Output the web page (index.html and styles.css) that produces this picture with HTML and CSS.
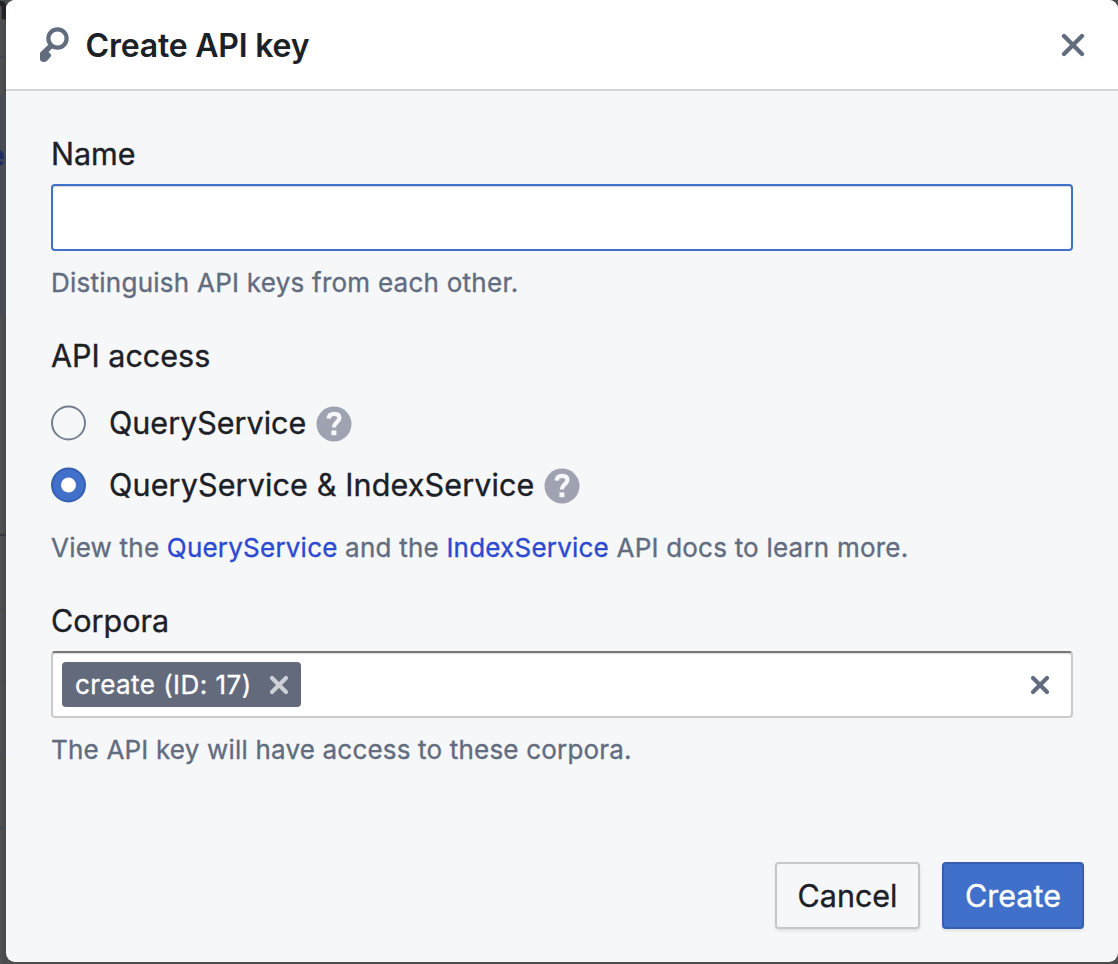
FILE: index.html
```html
<!DOCTYPE html>
<html lang="en">
<head>
<meta charset="utf-8">
<title>Create API key</title>
<link rel="stylesheet" href="styles.css">
</head>
<body>
<div class="backdrop"><span class="behind-title">n</span><span class="behind-link">e</span></div>
<main class="dialog">
  <header class="dialog-header">
    <svg class="key-icon" width="32" height="36" viewBox="0 0 32 36">
      <circle cx="18.5" cy="11.5" r="9.1" fill="none" stroke="#626c7f" stroke-width="4.2"/>
      <path d="M10 16.5 L13.8 20.8 L9.6 25 Q12 26.6 12.2 28.4 Q11.8 29.8 10.8 30.6 Q9.8 32.4 7.8 34 Q6.6 35 5 35 Q1 34.8 1 32.3 V25.8 L9 18 Z" fill="#626c7f"/>
    </svg>
    <h1 class="dialog-title"><span class="t-title">Create API key</span></h1>
    <svg class="close-icon" width="24" height="24" viewBox="0 0 24 24"><path d="M3 3 L21 21 M21 3 L3 21"/></svg>
  </header>
  <section class="dialog-body">
    <div class="field name-field">
      <label class="label t-name">Name</label>
      <div class="text-input"></div>
      <p class="help"><span class="t-help1">Distinguish API keys from each other.</span></p>
    </div>
    <div class="field access-field">
      <div class="label t-access">API access</div>
      <div class="option">
        <span class="radio"></span><span class="option-text t-query">QueryService</span>
        <svg class="info" width="36" height="36" viewBox="0 0 36 36"><circle cx="18" cy="18" r="17.5" fill="#9fa3b1"/><path d="M12.4 12.6 C13 9 15.3 7.9 18.2 7.9 C21.4 7.9 23.4 9.4 23.4 12.1 C23.4 15.9 18 16.4 18 21.6" fill="none" stroke="#f6f7f9" stroke-width="4.2"/><path d="M15.4 24.4h5v4.8h-5z" fill="#f6f7f9"/></svg>
      </div>
      <div class="option">
        <span class="radio checked"></span><span class="option-text t-index">QueryService &amp; IndexService</span>
        <svg class="info" width="36" height="36" viewBox="0 0 36 36"><circle cx="18" cy="18" r="17.5" fill="#9fa3b1"/><path d="M12.4 12.6 C13 9 15.3 7.9 18.2 7.9 C21.4 7.9 23.4 9.4 23.4 12.1 C23.4 15.9 18 16.4 18 21.6" fill="none" stroke="#f6f7f9" stroke-width="4.2"/><path d="M15.4 24.4h5v4.8h-5z" fill="#f6f7f9"/></svg>
      </div>
      <p class="help"><span class="t-help2">View the <a class="link">QueryService</a> and the <a class="link">IndexService</a> API docs to learn more.</span></p>
    </div>
    <div class="field corpora-field">
      <label class="label t-corpora">Corpora</label>
      <div class="tag-input">
        <span class="tag"><span class="tag-text t-tag">create (ID: 17)</span><svg class="tag-remove" width="20" height="20" viewBox="0 0 20 20"><path d="M3 3 L17 17 M17 3 L3 17"/></svg></span>
        <svg class="clear-icon" width="20" height="20" viewBox="0 0 20 20"><path d="M3 3 L17 17 M17 3 L3 17"/></svg>
      </div>
      <p class="help"><span class="t-help3">The API key will have access to these corpora.</span></p>
    </div>
  </section>
  <footer class="dialog-footer">
    <button class="button cancel"><span class="t-cancel">Cancel</span></button>
    <button class="button primary"><span class="t-create">Create</span></button>
  </footer>
</main>
</body>
</html>
```
FILE: styles.css
```css
* { box-sizing: border-box; }
html, body { height: 100%; overflow: hidden; }
body { margin: 0; padding-left: 6px; background: #4d4d4e; font-family: Inter, "Liberation Sans", sans-serif; color: #1c2027; -webkit-text-stroke: .35px currentColor; }

.backdrop {
  position: absolute; left: 0; top: 0; width: 6px; height: 964px; overflow: hidden;
  background-image:
    linear-gradient(#414550 0 0),
    linear-gradient(#474b54 0 0),
    linear-gradient(#363840 0 0),
    linear-gradient(#454952 0 0),
    linear-gradient(#454952 0 0),
    linear-gradient(#454952 0 0),
    linear-gradient(#454952 0 0),
    linear-gradient(90deg, #505152, #484849);
  background-size: 6px 2px, 6px 221px, 6px 2px, 6px 1px, 6px 1px, 6px 2px, 6px 2px, 6px 964px;
  background-position: 0 56px, 0 95px, 0 485px, 0 544px, 0 602px, 0 660px, 0 717px, 0 0;
  background-position: 0 56px, 0 95px, 0 534px, 0 608px, 0 681px, 0 754px, 0 827px, 0 0;
  background-repeat: no-repeat;
}
.behind-title { position: absolute; right: -2px; top: -12px; font: 600 32px/40px Inter, sans-serif; color: #202226; }
.behind-link { position: absolute; right: 1px; top: 142px; font: 600 29px/28px Inter, sans-serif; color: #202b66; }

.dialog { position: relative; display: flex; flex-direction: column; width: 1112px; height: 962px; border-radius: 9px; overflow: hidden; background: #f6f7f9; }
.dialog-header { display: flex; align-items: center; height: 91px; padding: 0 33px; background: #fff; border-bottom: 2px solid #d4d5d7; }
.key-icon { flex: none; margin-right: 14.5px; }
.dialog-title { flex: 1; margin: 0; padding-top: 2px; font-size: 32px; line-height: 40px; font-weight: 600; letter-spacing: -.2px; -webkit-text-stroke: 0; }
.close-icon path { fill: none; stroke: #626c7f; stroke-width: 4.3; stroke-linecap: round; }

.dialog-body { flex: 1; padding: 44px 45px 0; }
.field { display: flex; flex-direction: column; }
.label { align-self: flex-start; font-size: 30.5px; line-height: 38px; white-space: nowrap; }
.text-input { height: 67px; margin-top: 11px; border: 2px solid #4170cb; border-radius: 4px; background: #fff; box-shadow: inset 0 1px 1px rgba(17, 20, 24, .18); }
.help { margin: 0; font-size: 26px; line-height: 32px; color: #626c7f; white-space: nowrap; }
.name-field .help { margin-top: 16px; }
.link { color: #2c49d2; }
.t-help1 { letter-spacing: .25px; }
.t-help2 { letter-spacing: .215px; }
.t-help3 { letter-spacing: .19px; }
.t-index { letter-spacing: .14px; }
.t-tag { letter-spacing: .46px; }

.access-field { margin-top: 38px; }
.option { display: flex; align-items: center; height: 38px; margin-top: 29px; }
.option + .option { margin-top: 24px; }
.radio { width: 35px; height: 35px; flex: none; margin-right: 23px; border: 2px solid #748091; border-radius: 50%; transform: translateY(-.5px); }
.radio.checked { display: flex; align-items: center; justify-content: center; background: #4170cb; border-color: #3661b0; }
.radio.checked::after { content: ""; width: 15px; height: 15px; border-radius: 50%; background: #fff; }
.option-text { font-size: 30.5px; line-height: 38px; white-space: nowrap; }
.info { flex: none; margin: 1px 0 0 9.5px; }
.access-field .help { margin-top: 28px; }

.corpora-field { margin-top: 38px; }
.tag-input { display: flex; align-items: center; justify-content: space-between; height: 67px; margin-top: 11px; padding: 0 21px 0 9px; border: 2px solid #c9cbce; border-top-color: #77797c; border-radius: 4px; background: #fff; box-shadow: inset 0 1px 1px rgba(17, 20, 24, .15); }
.tag { display: flex; align-items: center; justify-content: space-between; width: 239px; height: 45px; padding: 0 12px 0 13px; border-radius: 4px; background: #626a7b; color: #fff; }
.tag-text { font-size: 26px; line-height: 32px; white-space: nowrap; }
.tag-remove path, .clear-icon path { fill: none; stroke-width: 4.2; stroke-linecap: round; }
.tag-remove path { stroke: #ced1d6; }
.clear-icon path { stroke: #626c7f; }
.corpora-field .help { margin-top: 16px; }

.dialog-footer { display: flex; justify-content: flex-end; gap: 22px; padding: 0 34px 33px 0; }
.button { display: flex; align-items: center; justify-content: center; height: 67px; padding: 0; border: 2px solid #c5c7ca; border-radius: 4px; background: #f6f7f9; box-shadow: 0 2px 3px rgba(17, 20, 24, .1); font: 400 30.5px/38px Inter, "Liberation Sans", sans-serif; color: #1c2027; -webkit-text-stroke: .35px currentColor; }
.cancel { width: 145px; }
.primary { width: 142px; border-color: #355fae; background: #4170cb; color: #fff; }
```
